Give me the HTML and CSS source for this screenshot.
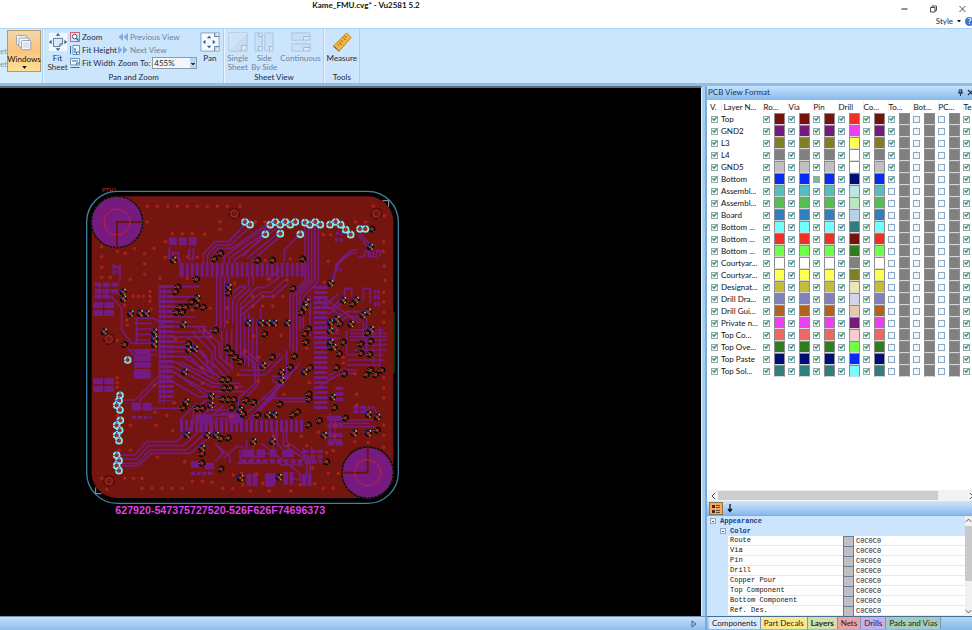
FILE: index.html
```html
<!DOCTYPE html>
<html lang="en">
<head>
<meta charset="utf-8">
<title>Kame_FMU.cvg* - Vu2581 5.2</title>
<link rel="stylesheet" href="styles.css">
</head>
<body>
<header class="titlebar">
  <h1 class="title">Kame_FMU.cvg* - Vu2581 5.2</h1>
  <div class="window-controls">
    <button aria-label="Minimize"><svg viewBox="0 0 8 8"><path d="M1 4H7" stroke="#222"/></svg></button>
    <button aria-label="Restore"><svg viewBox="0 0 8 8"><path d="M1 2.5H5.5V7H1ZM2.5 2.5V1H7V5.5H5.5" fill="none" stroke="#222" stroke-width=".8"/></svg></button>
    <button aria-label="Close"><svg viewBox="0 0 8 8"><path d="M1 1L7 7M7 1L1 7" stroke="#222" stroke-width=".8"/></svg></button>
  </div>
  <div class="style-menu">
    <button class="style-button">Style<svg viewBox="0 0 6 4"><path d="M1 1H5L3 3.5Z" fill="#111"/></svg></button>
    <button class="help" aria-label="Help">?</button>
  </div>
</header>

<nav class="ribbon" aria-label="Ribbon">
  <section class="group group-windows">
    <div class="cut-labels"><span>et</span><span>et</span></div>
    <button class="big windows">
      <svg viewBox="0 0 24 24"><g fill="#f6f7fa" stroke="#8795ab"><rect x="3" y="3" width="12" height="11" rx="1"/><rect x="6" y="6" width="12" height="11" rx="1"/><rect x="9" y="9" width="11" height="11" rx="1"/></g><rect x="11" y="11" width="7" height="7" fill="#dce3ef"/></svg>
      <span>Windows</span>
      <svg class="caret" viewBox="0 0 6 4"><path d="M0 0H6L3 4Z" fill="#111"/></svg>
    </button>
  </section>

  <section class="group">
    <div class="tools">
      <button class="big fit-sheet">
        <svg viewBox="0 0 22 22"><rect x="1" y="1" width="20" height="20" fill="#f3f8fc"/><path d="M6 7H16V13L13 16H6Z" fill="#dbe9f6" stroke="#4e6f94"/><path d="M13 16V13H16" fill="none" stroke="#4e6f94"/><path d="M11 1L13.5 4H8.5ZM11 21L13.5 18H8.5ZM1 11L4 8.5V13.5ZM21 11L18 8.5V13.5Z" fill="#315f96"/></svg>
        <span>Fit<br>Sheet</span>
      </button>
      <div class="stack">
        <button class="small"><svg viewBox="0 0 10 10"><rect x=".5" y=".5" width="9" height="9" fill="#dce9f8" stroke="#d36468"/><circle cx="4.7" cy="4.5" r="2.3" fill="#fff" stroke="#315c9a"/><path d="M6.5 6.5L8.5 8.5" stroke="#315c9a" stroke-width="1.4"/></svg>Zoom</button>
        <button class="small"><svg viewBox="0 0 10 10"><path d="M3 .5H9.5V9.5H3Z" fill="#eef6fd" stroke="#6f93b8"/><path d="M.5 1V9" stroke="#45698f"/><path d="M5 3V8" stroke="#75aade" stroke-width="2"/><path d="M6.5 9.5V7H9.5" fill="none" stroke="#45698f"/></svg>Fit Height</button>
        <button class="small"><svg viewBox="0 0 10 10"><path d="M.5 .5H9.5V7H.5Z" fill="#eef6fd" stroke="#6f93b8"/><path d="M.5 9.5H9.5" stroke="#45698f"/><path d="M2 3H8" stroke="#88b2dd" stroke-width="2"/><path d="M6.5 7V5H9.5" fill="none" stroke="#45698f"/></svg>Fit Width</button>
      </div>
      <div class="stack stack-views">
        <button class="small disabled"><svg viewBox="0 0 10 10"><path d="M5 1V9L.5 5ZM10 1V9L5.5 5Z" fill="#7daddd"/></svg>Previous View</button>
        <button class="small disabled"><svg viewBox="0 0 10 10"><path d="M0 1L4.5 5L0 9ZM5 1L9.5 5L5 9Z" fill="#7daddd"/></svg>Next View</button>
        <div class="zoom-to">
          <label for="zoom">Zoom To:</label>
          <span class="select-wrap"><select id="zoom"><option>455%</option></select></span>
        </div>
      </div>
      <button class="big pan">
        <svg viewBox="0 0 22 22"><path d="M1 1H21V21H1Z" fill="#f5faff" stroke="#7e9fbe"/><path d="M16 21V16H21M16 1V5H21" fill="#c1d9ef" stroke="#59799b"/><path d="M10 4L12.500 7H7.500ZM10 18L12.500 15H7.500ZM3 11L6 8.500V13.500ZM17 11L14 8.500V13.500Z" fill="#315f96"/></svg>
        <span>Pan</span>
      </button>
    </div>
    <h2>Pan and Zoom</h2>
  </section>

  <section class="group">
    <div class="tools sheet-tools">
      <button class="big disabled"><svg viewBox="0 0 22 22"><path d="M1 1H21V21H1Z" fill="#c6dcf0" stroke="#a7c4df"/><path d="M1 1H21L1 21Z" fill="#cfe3f5"/><path d="M15 21V15H21" fill="#e4f1fc" stroke="#8fb3d3"/></svg><span>Single<br>Sheet</span></button>
      <button class="big disabled"><svg viewBox="0 0 22 22"><path d="M1 1H9V21H1ZM12 1H21V21H12Z" fill="#c9dff2" stroke="#a7c4df"/><path d="M5 21V16H9M17 21V16H21M5 1V5H9" fill="#e4f1fc" stroke="#8fb3d3"/></svg><span>Side<br>By Side</span></button>
      <button class="big disabled"><svg viewBox="0 0 22 22"><path d="M1 1H21V9H1ZM1 13H21V21H1Z" fill="#c9dff2" stroke="#a7c4df"/><path d="M14 9V5H21M14 21V17H21" fill="#e4f1fc" stroke="#8fb3d3"/></svg><span>Continuous</span></button>
    </div>
    <h2>Sheet View</h2>
  </section>

  <section class="group">
    <div class="tools">
      <button class="big measure"><svg viewBox="0 0 22 22"><path d="M16 1L21 6L8 21L2 15Z" fill="#f3b93f" stroke="#bd7d1d"/><path d="M2 15L8 21V22L1 16Z" fill="#966019"/><path d="M14 4L16 6M12 6L15 9M10 9L12 11M8 11L11 14M6 13L8 15" stroke="#775018"/></svg><span>Measure</span></button>
    </div>
    <h2>Tools</h2>
  </section>
</nav>

<main class="workspace">
  <section class="viewer" aria-label="Board view">
    <div class="canvas">
      <svg class="board" viewBox="-240 -276 2103 1584" preserveAspectRatio="xMinYMin meet" role="img" aria-label="PCB layout">
        <defs>
          <marker id="via" markerUnits="userSpaceOnUse" markerWidth="26" markerHeight="26" refX="13" refY="13" viewBox="0 0 26 26">
            <circle cx="13" cy="13" r="8" fill="#a82620" stroke="#080808" stroke-width="5"/><path d="M6 7H9M17 20H20" stroke="#8d7c27" stroke-width="3"/><path d="M3 14H7" stroke="#6d8f83" stroke-width="3"/>
          </marker>
          <marker id="via-mixed" markerUnits="userSpaceOnUse" markerWidth="26" markerHeight="26" refX="13" refY="13" viewBox="0 0 26 26">
            <circle cx="13" cy="13" r="8" fill="#a82f20" stroke="#080808" stroke-width="5"/><path d="M5 12A8 8 0 0 1 9 6" fill="none" stroke="#1738ef" stroke-width="4"/><path d="M15 21A8 8 0 0 0 20 17" fill="none" stroke="#a9a52c" stroke-width="4"/><path d="M16 5H20V9" fill="none" stroke="#8ee9dc" stroke-width="3"/>
          </marker>
          <marker id="via-cyan" markerUnits="userSpaceOnUse" markerWidth="26" markerHeight="26" refX="13" refY="13" viewBox="0 0 26 26">
            <circle cx="13" cy="13" r="9" fill="#9d2b28" stroke="#79eff0" stroke-width="5"/><path d="M11 4H15M4 12V15" stroke="#1548df" stroke-width="4"/>
          </marker>
          <marker id="dot" markerUnits="userSpaceOnUse" markerWidth="12" markerHeight="12" refX="6" refY="6" viewBox="0 0 12 12"><circle cx="6" cy="6" r="3.500" fill="#8d1d18" stroke="#c62c26" stroke-width="2.500"/></marker>
        </defs>

        <rect x="20" y="34" width="935" height="936" rx="92" fill="#000" stroke="#477e9c" stroke-width="4"/>
        <rect x="35" y="49" width="905" height="905" rx="76" fill="#75150f"/>
        <path d="M942 395V580" stroke="#174d17" stroke-width="4"/>

        <g class="traces">
          <path d="M370 250V222L405 185H445L510 118M382 250V226L410 195H450L530 124M394 250V232L415 205H455L560 133M432 250V230L570 134M448 250V235L585 136M464 250V240L602 136M488 230L545 170M500 236L595 160M512 245L610 162M613 245V210L658 164M675 138V300L630 345M685 138V300L640 345M695 138V300L650 345M705 138V300L660 345M715 138V305L670 350M410 290V435L380 463M422 290V440L400 463M434 290V445M450 345L480 320H495M460 355L500 320M470 365L514 322M480 375L530 322H555L600 290M480 390L545 336H575L615 300M485 405L550 350H580L625 310M470 370V530M482 380V540M494 395V555M630 345V510M640 345V520M650 345V520M660 345V450M670 350V445"/>
          <path d="M280 320L360 320M260 350H345M260 365H320M260 380H330M260 396H320M260 411H345M260 426H330M260 440H380M260 456H380M260 471H390M260 486H330M260 502H320L360 540M120 305V270L100 255V285M45 330H100L128 350M55 350H95L125 385V450L155 490H230M60 310V350M80 310V350M150 510H230M140 500L160 525H230M165 415H220L250 433M165 430H215M165 447H230M165 463H230M165 480H230M170 415V490M240 320V670M252 320V670M350 440L405 500V535L450 580M365 440L418 490V530L460 565M335 455L395 515V545L435 590M320 470L380 530V555L420 595M280 500H345L405 565M280 515H335L395 575M280 530H330L385 590"/>
          <path d="M285 545L400 610H480M270 555L395 620H490M250 560L385 635H495M235 580L355 650H420M235 590L165 660H100M235 605L180 660V685H300M190 685H290M380 660L340 690V735L290 785H200L165 825H110M400 665L360 690V750L310 797H205L170 837H115M410 675L375 700V760L320 810H210L172 850H118M430 675L390 715V770L330 820H215L175 858H120M420 700H490M400 715H480M350 690H480M350 705H475M480 570H550L600 520M480 585H555L610 530M480 515L525 550V610L475 655V710M490 505L535 543V612L490 662V710M580 585V605L610 615V580M580 590H620M620 510V590L500 700M590 642L530 700M550 655H685M590 665H690M505 720L650 560M515 720L660 550M610 750V795L680 840V890M620 750V785L690 835V890L660 900M590 755V790L610 810M580 750V820H545"/>
          <path d="M700 400H750L790 365M700 370H745L775 340M700 385H755L790 350M700 445H760L800 410H830L850 430V530M700 430H755L800 395H840L860 415V520M700 460H780M700 475H780M700 490H765M730 595L780 570H830M730 610L785 580H830M710 625L760 590M760 300L775 245L815 210H835M755 310L770 255L812 220H830M840 160L880 205V225M835 165L870 210V227M800 450V520M810 450H910M810 460H920M810 470H920M810 480H920M830 495H920M820 510H920M800 525H910M800 540H915M800 555H900M900 440V560M880 450V550M850 365V325H870V370M795 365V325H815V350M835 230H855V212H865V230H890V212H900V228M750 700V790M765 710V790M740 710H785M750 730H870M760 720H880M760 740H890M745 765H785M745 780H785M850 695L880 680L900 715"/>
          <path d="M405 790L430 820L405 845M415 800L450 830V850M430 835L470 800H490M470 850H550M480 810V850M500 780V830H545M520 780V840M545 790L620 850L660 880V900L630 895M600 855L670 855M670 800V840M695 800V840"/>
          <path d="M446 290V420M458 360V430M506 400V560M518 410V565M530 425V545M542 385V430M425 450V540M440 450V555M455 440V570M300 545L410 600M310 530L405 585M280 575L385 650M300 290V235M725 350L790 395L840 430M700 350L785 408M690 345V470M300 720L350 670M560 300L600 270M506 290V320M520 290V315"/>
        </g>
        <g class="pads">
          <path d="M302 269H680" stroke-width="42" stroke-dasharray="9 6"/>
          <path d="M258 315V662" stroke-width="46" stroke-dasharray="9 6"/>
          <path d="M722 318V687" stroke-width="40" stroke-dasharray="9 6"/>
          <path d="M300 738H675" stroke-width="38" stroke-dasharray="9 6"/>
          <path d="M266 190H350M266 178H350" stroke-width="12" stroke-dasharray="24 6"/>
          <path d="M268 202V235H278V218H295V238H300M328 205V238H340V205" stroke-width="6"/>
          <path d="M44 314H120M44 334H120M44 350H90" stroke-width="13" stroke-dasharray="20 5"/>
          <path d="M40 375H102M40 399H102" stroke-width="18" stroke-dasharray="29 4"/>
          <path d="M100 260H123M100 276H123" stroke-width="10" stroke-dasharray="10 4"/>
          <path d="M40 604H102M40 627H102" stroke-width="18" stroke-dasharray="29 4"/>
          <path d="M162 515H215M162 535H215M162 555H215M162 575H215M162 588H215" stroke-width="16" stroke-dasharray="50 3"/>
          <path d="M155 680H180M188 680H215" stroke-width="24"/>
          <path d="M155 712H215" stroke-width="9" stroke-dasharray="13 5"/>
          <path d="M333 853H365M375 858H402" stroke-width="19"/>
          <path d="M333 880H402" stroke-width="10" stroke-dasharray="12 5"/>
          <path d="M345 705H390L405 730H345ZM440 700H500L480 730H450Z" fill="#731b82"/>
          <path d="M485 820H520M530 820H555M570 820H590M607 820H640" stroke-width="24"/>
          <path d="M485 844H725" stroke-width="14" stroke-dasharray="15 6"/>
          <path d="M500 900H532M555 900H585M610 895H640M665 900H695" stroke-width="38" stroke-dasharray="14 4"/>
          <path d="M558 880H585L590 900L575 920H558Z" fill="#731b82"/>
          <path d="M742 715H790M742 738H790M742 765H790M742 790H790" stroke-width="14" stroke-dasharray="20 6"/>
          <path d="M768 160H790M765 180H790M765 255H780M765 269H785" stroke-width="10" stroke-dasharray="10 4"/>
          <path d="M766 625H790M766 642H790M766 658H790" stroke-width="10"/>
          <path d="M882 335H900M882 352H900M882 373H900" stroke-width="12" stroke-dasharray="8 3"/>
          <path d="M820 682H870M820 695H860M670 815H730M670 830H730" stroke-width="10" stroke-dasharray="16 5"/>
        </g>

        <g fill="#771a80" stroke="#080808" stroke-width="4">
          <circle cx="111" cy="126" r="77"/><circle cx="863" cy="878" r="77"/>
        </g>
        <g fill="none" stroke="#56711c" stroke-width="2" stroke-dasharray="4 7">
          <circle cx="111" cy="126" r="77"/><circle cx="863" cy="878" r="77"/>
        </g>
        <path d="M111 203V126H188M863 801V878H786" fill="none" stroke="#69130f" stroke-width="6"/>
        <g fill="none" stroke="#c8202d" stroke-width="3"><circle cx="111" cy="126" r="39"/><circle cx="863" cy="878" r="39"/></g>
        <g fill="none" stroke="#ad2923" stroke-width="3">
          <circle cx="463" cy="101" r="10"/><circle cx="889" cy="101" r="10"/><circle cx="87" cy="477" r="10"/><circle cx="87" cy="903" r="10"/>
        </g>
        <g fill="none" stroke="#28110d" stroke-width="3" stroke-dasharray="14 5">
          <circle cx="463" cy="101" r="16"/><circle cx="889" cy="101" r="16"/><circle cx="87" cy="477" r="16"/><circle cx="87" cy="903" r="16"/>
        </g>
        <path d="M908 62H926V80M47 922V941H65" fill="none" stroke="#a4a4a4" stroke-width="3"/>

        <polyline class="dots" points="202,79 232,79 263,79 292,79 322,79 352,79 382,79 412,79 442,79 201,126 421,125 421,148 277,161 307,161 337,161 374,163 257,185 65,200 65,230 65,262 65,292 112,214 136,220 163,206 194,221 222,205 194,252 194,283 256,232 322,230 352,232 151,298 91,292 240,295 322,295 160,349 175,349 190,349 210,335 210,349 210,364 214,388 391,385 337,390 464,310 442,385 442,426 391,471 373,450 134,376 140,420 142,435 112,481 287,478 480,79"/>
        <polyline class="dots" points="526,126 555,126 632,126 827,126 857,126 730,164 752,164 880,79 913,107 911,185 910,214 745,244 913,259 915,301 911,337 911,366 911,397 911,427 733,307 556,241 631,237 568,298 621,300 518,349 548,349 578,349 608,349 518,378 548,378 578,378 520,469 603,466 772,450 680,505"/>
        <polyline class="dots" points="112,593 112,608 112,622 224,616 283,668 367,563 367,610 475,584 470,623 225,697 261,706 112,706 151,736 227,736 278,753 118,811 151,811 232,831 314,845 65,895 134,895 161,895 186,895 186,925 216,925 247,925 277,925 307,925 337,904 367,904 397,907 428,925 458,925 80,928 460,884 488,914 485,880 455,708"/>
        <polyline class="dots" points="494,514 536,532 535,603 613,643 688,608 790,532 790,549 825,581 911,593 911,623 911,653 830,643 830,675 859,710 766,736 764,769 664,769 581,769 715,757 911,736 911,766 911,802 865,788 824,785 740,818 760,812 680,797 625,797 698,864 745,880 775,880 530,882 704,911 730,925 760,925 511,933 568,933 632,933 660,913 548,910"/>

        <polyline class="vias" points="403,237 422,220 349,298 446,339 294,321 286,335 335,366 351,377 370,382 300,382 317,382 289,397 307,397 407,451 326,492 443,504 533,241 578,241 668,237 876,147 639,326 664,398 818,372 554,462 675,461 686,447 678,487 780,431 750,487 790,487 843,492 873,484 862,459 134,494"/>
        <polyline class="vias" points="442,504 454,519 466,532 482,545 428,599 445,599 433,624 451,624 428,658 445,659 462,659 456,683 489,703 310,684 352,685 368,685 423,776 445,774 423,867 480,894 366,821 366,850 577,532 643,529 631,562 498,661 521,667 600,673 687,642 687,658 482,687 490,702 533,705 638,705 653,696 685,735 690,563 770,563 778,521 752,502 870,523 872,571 858,584 887,584 906,571 763,683 796,714 718,722 892,751 740,845 843,520 793,581"/>
        <polyline class="mixed" points="129,336 130,356 446,322 351,355 152,401 180,400 200,401 310,434 223,456 223,476 223,493 72,455 280,240 345,507 871,201 678,366 672,382 790,361 828,360 864,395 849,405 752,310 504,429 543,429 563,429 583,429 622,429 752,428 770,418 813,433 750,452 752,487 761,502 873,448 326,509 314,576 394,649 392,676 480,690 318,666 321,765 382,766 408,765 366,805 549,557 604,577 604,601 563,705 583,705 674,576 758,652 732,766 822,760 865,760 865,704 892,711 520,785 578,785 597,892 482,894"/>
        <polyline class="cyan" points="495,126 510,134 571,134 586,126 601,134 616,126 631,134 646,126 675,128 690,134 706,126 721,134 750,134 767,126 782,134 797,149 812,164 840,147 856,147 556,163 601,161 661,163 143,540 120,646 117,662 110,676 120,690 121,721 110,736 119,751 110,766 117,782 110,826 117,842 110,857 117,872"/>
        <text x="66" y="36" class="pth">PTH1</text>
        <text x="106" y="1003" class="board-name">627920-547375727520-526F626F74696373</text>
      </svg>
    </div>
    <div class="canvas-scroll"><button aria-label="Scroll right"><svg viewBox="0 0 6 8"><path d="M1 1L5 4L1 7Z" fill="none" stroke="#40607e"/></svg></button></div>
  </section>

  <aside class="panel" aria-label="PCB View Format">
    <div class="panel-title"><h2>PCB View Format</h2>
      <div class="panel-actions">
        <button aria-label="Pin panel"><svg viewBox="0 0 8 8"><path d="M2.500 1H5.500V4.500H2.500ZM1 4.500H7M4 5V8" fill="none" stroke="#17243a"/><path d="M5 1V4" stroke="#17243a"/></svg></button>
        <button aria-label="Close panel"><svg viewBox="0 0 8 8"><path d="M1 1L7 7M7 1L1 7" stroke="#17243a" stroke-width="1.300"/></svg></button>
      </div>
    </div>
    <div class="layers">
      <table>
        <thead><tr><th class="col-v">V.</th><th class="col-name">Layer N...</th><th>Ro...</th><th>Via</th><th>Pin</th><th>Drill</th><th>Co...</th><th>To...</th><th>Bot...</th><th>PC...</th><th>Te</th></tr></thead>
        <tbody id="layer-rows"></tbody>
      </table>
    </div>
    <div class="table-scroll"><svg viewBox="0 0 6 8"><path d="M5 1L2 4L5 7" fill="none" stroke="#444"/></svg><span class="thumb"></span><svg viewBox="0 0 6 8"><path d="M2 1L5 4L2 7" fill="none" stroke="#444"/></svg></div>
    <div class="property-tools">
      <button class="categorized" aria-label="Categorized"><svg viewBox="0 0 10 10"><path d="M1 1H4V4H1ZM1 6H4V9H1Z" fill="#3f2a20"/><path d="M5 1.500H9M5 3.500H9M5 6.500H9M5 8.500H9" stroke="#5b4738"/></svg></button>
      <button aria-label="Sort"><svg viewBox="0 0 10 10"><path d="M5 1V8M3 6L5 8.500L7 6" fill="none" stroke="#111" stroke-width="1.300"/></svg></button>
    </div>
    <div class="properties">
      <div class="property-list">
        <div class="category"><span class="minus"></span>Appearance</div>
        <div class="category sub"><span class="minus"></span>Color</div>
        <dl>
          <div><dt>Route</dt><dd>C0C0C0</dd></div><div><dt>Via</dt><dd>C0C0C0</dd></div><div><dt>Pin</dt><dd>C0C0C0</dd></div><div><dt>Drill</dt><dd>C0C0C0</dd></div><div><dt>Copper Pour</dt><dd>C0C0C0</dd></div><div><dt>Top Component</dt><dd>C0C0C0</dd></div><div><dt>Bottom Component</dt><dd>C0C0C0</dd></div><div><dt>Ref. Des.</dt><dd>C0C0C0</dd></div>
        </dl>
      </div>
      <div class="property-scroll"><svg viewBox="0 0 8 6"><path d="M1 5L4 2L7 5" fill="none" stroke="#444"/></svg><span class="thumb"></span><svg viewBox="0 0 8 6"><path d="M1 1L4 4L7 1" fill="none" stroke="#444"/></svg></div>
    </div>
    <div class="tabs" role="tablist">
      <button role="tab" class="tab components">Components</button><button role="tab" class="tab decals">Part Decals</button><button role="tab" class="tab active" aria-selected="true">Layers</button><button role="tab" class="tab nets">Nets</button><button role="tab" class="tab drills">Drills</button><button role="tab" class="tab pads-tab">Pads and Vias</button>
    </div>
  </aside>
</main>
<script src="app.js"></script>
</body>
</html>
```
FILE: styles.css
```css
* { box-sizing: border-box; }
body { margin: 0; height: 100vh; display: flex; flex-direction: column; overflow: hidden; background: #fff; color: #1e2a3c; font: 8px/12px Lato, "Open Sans", sans-serif; }
button { margin: 0; padding: 0; border: 0; background: none; color: inherit; font: inherit; }
h1, h2, dl, dd { margin: 0; font: inherit; }
svg { display: block; }

.titlebar { height: 28px; flex: none; display: grid; grid-template-columns: 1fr auto 1fr; grid-template-rows: 14px 14px; padding-left: 2px; }
.title { grid-column: 2; padding-right: 242px; font-weight: 700; line-height: 10px; color: #111; }
.window-controls { grid-column: 3; grid-row: 1; justify-self: end; display: flex; gap: 20px; padding: 3px 5px 0 0; }
.window-controls svg { width: 9px; height: 8px; }
.style-menu { grid-column: 3; grid-row: 2; justify-self: end; display: flex; align-items: center; gap: 3px; margin-right: -2px; }
.style-button { display: flex; align-items: center; gap: 3px; }
.style-button svg { width: 6px; height: 4px; }
.help { width: 9px; height: 9px; border-radius: 50%; background: #3d74cf; color: #fff; font-weight: 700; line-height: 8px; }

.ribbon { height: 58px; flex: none; display: flex; background: #cbe5fc; border-top: 1px solid #a9d5f6; border-bottom: 3px solid #91bde4; }
.group { display: flex; flex-direction: column; justify-content: space-between; padding: 1px 2px 0; border-left: 1px solid #e6f5ff; border-right: 1px solid #a4d1f1; }
.group h2 { line-height: 11px; text-align: center; }
.group-windows { flex-direction: row; justify-content: flex-start; padding: 1px 1px 0 0; border-left: 0; background: #d8edfc; }
.cut-labels { display: flex; flex-direction: column; gap: 1px; padding-top: 15px; color: #7d94ab; width: 7px; }
.tools { display: flex; gap: 1px; }
.big { display: flex; flex-direction: column; align-items: center; line-height: 9px; }
.big svg { width: 20px; height: 20px; flex: none; margin-top: 2px; }
.big span { padding-top: 2px; }
.big .caret { width: 5px; height: 3px; }
.windows { width: 34px; height: 42px; border: 1px solid #b59a6d; background: linear-gradient(#f5d6aa, #f9c57d 50%, #ffdf95); color: #111; }
.fit-sheet, .pan { width: 23px; }
.stack { display: flex; flex-direction: column; gap: 1px; padding-top: 1px; }
.small, .zoom-to { display: flex; align-items: center; gap: 2px; height: 12px; white-space: nowrap; line-height: 12px; }
.small svg { width: 10px; height: 10px; flex: none; }
.disabled { color: #6f8299; }
.select-wrap { position: relative; }
.select-wrap::after { content: ""; position: absolute; right: 1px; top: 1px; width: 6px; height: 10px; background: linear-gradient(#333, #333) 50% 50% / 4px 1px no-repeat, linear-gradient(#333, #333) 50% 6px / 2px 1px no-repeat, #b4d7f5; pointer-events: none; }
select { display: block; width: 45px; height: 12px; padding: 0 1px; appearance: none; border: 1px solid #929aa4; border-radius: 0; background: #f4f7fa; color: #222; font: inherit; line-height: 10px; }
.sheet-tools { gap: 3px; }
.measure { width: 30px; }

.workspace { display: flex; flex: 1; min-height: 0; background: #a9cff1; }
.viewer { flex: 1; min-width: 0; display: flex; flex-direction: column; }
.canvas { flex: 1; min-height: 0; margin-right: 3px; border-top: 2px solid #5e6b76; border-right: 1px solid #e3edf5; background: #000; }
.board { width: 100%; height: 100%; }
.traces { fill: none; stroke: #751b80; stroke-width: 5; }
.pads { fill: none; stroke: #731b82; }
.dots, .vias, .mixed, .cyan { fill: none; stroke: none; }
.dots { marker: url(#dot); }
.vias { marker: url(#via); }
.mixed { marker: url(#via-mixed); }
.cyan { marker: url(#via-cyan); }
.pth { fill: #c33c38; font: 17px "Liberation Sans", sans-serif; }
.board-name { fill: #e341e7; font: bold 32px "Liberation Sans", sans-serif; }
.canvas-scroll { height: 14px; flex: none; display: flex; justify-content: flex-end; align-items: center; padding-right: 8px; background: linear-gradient(#c6e0fa, #8dbdec); border-top: 1px solid #7093b2; }
.canvas-scroll svg { width: 6px; height: 8px; }

.panel { width: 267px; flex: none; display: flex; flex-direction: column; border-left: 2px solid #76ace0; background: #fff; overflow: hidden; }
.panel-title { height: 14px; flex: none; display: flex; align-items: center; justify-content: space-between; padding: 0 0 2px 1px; background: linear-gradient(#c7e2fb, #86b9ec); color: #16355e; }
.panel-actions { display: flex; gap: 3px; margin-right: -2px; }
.panel-actions svg { width: 7px; height: 7px; }
.layers { flex: 1; min-height: 0; overflow: hidden; padding-left: 2px; }
table { width: 279px; table-layout: fixed; border-collapse: collapse; color: #111; }
th { width: 25px; height: 13px; padding: 0; text-align: left; font-weight: 400; white-space: nowrap; border-right: 1px solid #eaedf0; }
.col-v { width: 12px; padding-left: 1px; }
.col-name { width: 42px; padding-left: 2px; }
td { height: 12px; padding: 0; line-height: 12px; white-space: nowrap; }
td.visible { padding-left: 2px; }
.cell { display: flex; align-items: center; gap: 4px; height: 12px; }
input[type="checkbox"] { display: block; flex: none; width: 7px; height: 7px; margin: 0; appearance: none; border: 1px solid #8ca7c4; background: #f5f6f6; }
input[type="checkbox"]:checked::before { content: ""; display: block; width: 5px; height: 5px; background: #2d952c; clip-path: polygon(0 45%, 20% 30%, 40% 55%, 85% 0, 100% 20%, 42% 95%); }
input[type="checkbox"]:indeterminate::before { content: ""; display: block; width: 5px; height: 5px; background: #7ebd7b; clip-path: none; }
.swatch { width: 11px; height: 12px; border: 1px solid #8c8c8c; border-bottom-color: #d7d7d7; }
.table-scroll { height: 11px; flex: none; display: flex; align-items: center; justify-content: space-between; padding-left: 3px; margin-right: -2px; background: #f2f2f2; }
.table-scroll svg { width: 6px; height: 8px; }
.table-scroll .thumb { width: 220px; height: 9px; margin: 0 auto 0 2px; background: #cdcdcd; }
.property-tools { height: 14px; flex: none; display: flex; align-items: center; gap: 2px; padding-left: 2px; background: linear-gradient(#cfe6fd, #87b9ec); }
.property-tools svg { width: 10px; height: 10px; }
.categorized { width: 14px; height: 13px; padding: 1px; border: 1px solid #8c7254; background: #f6a85b; }
.properties { flex: none; height: 101px; display: flex; overflow: hidden; border-top: 1px solid #83acd5; font: 7px/10px "Liberation Mono", monospace; }
.property-list { flex: 1; padding-left: 2px; background: #cce5fd; }
.category { display: flex; align-items: center; gap: 4px; height: 10px; padding-left: 1px; color: #15428b; font-weight: 700; }
.sub { padding-left: 11px; }
.minus { width: 6px; height: 6px; border: 1px solid #8fa6c0; background: linear-gradient(#416489, #416489) 50% 50% / 2px 1px no-repeat, #eaf3fc; }
.property-list dl { margin-left: 19px; background: #fff; color: #111; }
.property-list dl div { display: grid; grid-template-columns: 113px 1fr; height: 10px; border-bottom: 1px solid #dcebfa; padding-left: 2px; }
dt, dd { line-height: 9px; }
dd { display: flex; align-items: center; gap: 2px; }
dd::before { content: ""; width: 9px; height: 9px; border: 1px solid #667b9d; background: #c0c0c0; }
.property-scroll { width: 7px; flex: none; display: flex; flex-direction: column; align-items: center; background: #f0f0f0; }
.property-scroll svg { width: 7px; height: 8px; }
.property-scroll .thumb { width: 7px; height: 55px; margin: 2px 0 auto; background: #c9c9c9; }
.tabs { height: 14px; flex: none; display: flex; padding-left: 2px; border-top: 1px solid #496e96; background: linear-gradient(#b4d6f6, #84b7eb); }
.tab { height: 12px; padding: 0 3px; line-height: 11px; white-space: nowrap; border-right: 1px solid #7c97b5; color: #222; }
.components { background: #dbeafb; }
.decals { background: #fae88b; }
.active { background: #d4e0ac; font-weight: 700; }
.nets { background: #eda1a4; }
.drills { background: #c8afeb; }
.pads-tab { background: #a0cdbc; }
```
FILE: app.js
```js
// name, main colour, drill colour, top-component flag
const layers = [
  ["Top", "#74130e", "#ee3124", true],
  ["GND2", "#761b7d", "#ed3ff0", true],
  ["L3", "#807f23", "#ffff50", true],
  ["L4", "#808080", "#ffffff", true],
  ["GND5", "#c0c0c0", "#ffffff", true],
  ["Bottom", "#052bf4", "#000f78", true],
  ["Assembl...", "#54bdbd", "#b7e7e7", false],
  ["Assembl...", "#54bd54", "#b7e7c1", false],
  ["Board", "#317fbd", "#b2d3ea", false],
  ["Bottom ...", "#71ffff", "#317f7c", false],
  ["Bottom ...", "#ee3124", "#74130e", false],
  ["Bottom ...", "#70ff48", "#317c20", false],
  ["Courtyar...", "#ffffff", "#808080", false],
  ["Courtyar...", "#ffff50", "#807f23", false],
  ["Designat...", "#c1be3b", "#e9e8b4", false],
  ["Drill Dra...", "#8080bd", "#d3d3e9", false],
  ["Drill Gui...", "#b0621e", "#e5c9ae", false],
  ["Private n...", "#ed3ff0", "#761b7d", false],
  ["Top Co...", "#ed6864", "#f8cccc", false],
  ["Top Ove...", "#317c20", "#70ff48", false],
  ["Top Paste", "#000f78", "#052bf4", false],
  ["Top Sol...", "#317f7c", "#71ffff", false]
];
const columns = ["Route", "Via", "Pin", "Drill", "Copper", "Top", "Bottom", "PCB", "Text"];
const checkbox = (label, on) => `<input type="checkbox" aria-label="${label}"${on ? " checked" : ""}>`;

document.getElementById("layer-rows").innerHTML = layers.map(([name, main, drill, top]) => {
  const cells = columns.map((column, i) => {
    const on = i < 5 || i === 8 || (i === 5 && top);
    const color = i === 3 ? drill : i < 5 ? main : "#808080";
    return `<td><div class="cell">${checkbox(name + " " + column, on)}<span class="swatch" style="background:${color}"></span></div></td>`;
  }).join("");
  return `<tr><td class="visible">${checkbox(name + " visible", true)}</td><td class="name">${name}</td>${cells}</tr>`;
}).join("");
const bottomPin = document.querySelector('[aria-label="Bottom Pin"]');
bottomPin.checked = false;
bottomPin.indeterminate = true;
```
